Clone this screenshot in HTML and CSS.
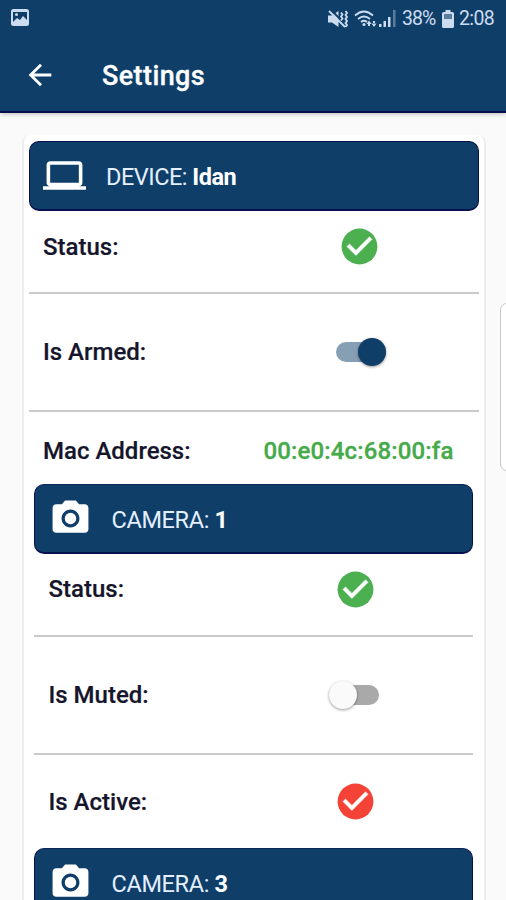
FILE: index.html
```html
<!DOCTYPE html>
<html lang="en">
<head>
<meta charset="utf-8">
<title>Settings</title>
<link rel="stylesheet" href="styles.css">
</head>
<body>
<svg class="defs" aria-hidden="true">
  <symbol id="check" viewBox="0 0 24 24"><circle cx="12" cy="12" r="10" fill="currentColor"/><path fill="#fff" stroke="#fff" stroke-width=".3" d="M10 17l-5-5 1.41-1.41L10 14.17l7.59-7.59L19 8z"/></symbol>
  <symbol id="camera" viewBox="0 0 24 24"><circle cx="12" cy="12" r="3.2"/><path d="M9 2L7.17 4H4c-1.1 0-2 .9-2 2v12c0 1.1.9 2 2 2h16c1.1 0 2-.9 2-2V6c0-1.1-.9-2-2-2h-3.17L15 2H9zm3 15c-2.76 0-5-2.24-5-5s2.24-5 5-5 5 2.24 5 5-2.24 5-5 5z"/></symbol>
</svg>
<div class="screen">
  <header class="top">
    <div class="statusbar">
      <svg class="s-image" viewBox="0 0 18 17"><rect width="18" height="17" rx="2.5"/><path fill="#0f3f69" d="M2 3h14v8l-4-4-3 4-3-2-4 4z"/><circle cx="5.5" cy="5.5" r="1.5"/></svg>
      <div class="indicators">
        <svg class="s-mute" viewBox="0 0 20 18"><path d="M0 5.500h4L10.500 1v16L4 12.500H0z"/><path class="cut" d="M3 0l14 14"/><path class="ink" d="M1 1l16 16M13 2.500l1.500 2-1.500 2 1.500 2-1.500 2M17.500 1l1.500 2-1.500 2 1.500 2-1.500 2 1.500 2-1.500 2 1.500 2-1.500 2"/></svg>
        <svg class="s-wifi" viewBox="0 0 23 18"><path class="ink" d="M1 5.5Q10-2.500 19 5.500M4 9q6-5 12 0M7 12q3-2.500 6 0"/><circle cx="10" cy="14.500" r="1.600"/><path d="M12.500 14l2.500-3.500 2.500 3.500zM17.500 13.500l2.500 3.500 2.500-3.500zM14 13h2v3h-2zM19 11h2v3h-2z"/></svg>
        <svg class="s-signal" viewBox="0 0 17 17"><path d="M0 14h2.500v3H0zM4.500 11H7v6H4.500zM9 7h2.500v10H9z"/><path opacity=".4" d="M14 0h2.500v17H14z"/></svg>
        <span class="percent">38%</span>
        <svg class="s-battery" viewBox="0 0 12 18"><path d="M3.500 0h5v2h2q1.500 0 1.500 1.500v13q0 1.500-1.500 1.500h-9Q0 18 0 16.500v-13Q0 2 1.500 2h2z"/><path fill="#5c7d9c" d="M2 4h8v5H2z"/></svg>
        <span class="clock">2:08</span>
      </div>
    </div>
    <div class="appbar">
      <svg class="back" viewBox="0 0 24 24"><path d="M20 11H7.830l5.590-5.590L12 4l-8 8 8 8 1.410-1.410L7.830 13H20v-2z"/></svg>
      <h1>Settings</h1>
    </div>
  </header>
  <main>
    <section class="card">
      <div class="banner">
        <svg class="icon" viewBox="0 0 24 24"><path d="M20 18c1.100 0 1.990-.9 1.990-2L22 6c0-1.100-.9-2-2-2H4c-1.100 0-2 .9-2 2v10c0 1.100.9 2 2 2H0v2h24v-2h-4zM4 6h16v10H4V6z"/></svg>
        <p>DEVICE: <b>Idan</b></p>
      </div>
      <div class="row status"><span class="label">Status:</span><span class="value"><svg class="check ok"><use href="#check"/></svg></span></div>
      <div class="row toggle"><span class="label">Is Armed:</span><span class="value"><span class="switch on"></span></span></div>
      <div class="row mac"><span class="label">Mac Address:</span><span class="value address">00:e0:4c:68:00:fa</span></div>
      <div class="camera">
        <div class="banner">
          <svg class="icon"><use href="#camera"/></svg>
          <p>CAMERA: <b>1</b></p>
        </div>
        <div class="row status"><span class="label">Status:</span><span class="value"><svg class="check ok"><use href="#check"/></svg></span></div>
        <div class="row toggle"><span class="label">Is Muted:</span><span class="value"><span class="switch off"></span></span></div>
        <div class="row active"><span class="label">Is Active:</span><span class="value"><svg class="check bad"><use href="#check"/></svg></span></div>
      </div>
      <div class="camera">
        <div class="banner">
          <svg class="icon"><use href="#camera"/></svg>
          <p>CAMERA: <b>3</b></p>
        </div>
      </div>
    </section>
  </main>
  <div class="edge-handle"></div>
</div>
</body>
</html>
```

FILE: styles.css
```css
* { box-sizing: border-box; }
body { margin: 0; font-family: Roboto, "Liberation Sans", sans-serif; color: #15152b; background: #fafafa; }
h1, p { margin: 0; }
.defs { position: absolute; width: 0; height: 0; }
.screen { position: relative; width: 506px; height: 900px; overflow: hidden; }

.top { height: 113px; background: #0f3f69; border-bottom: 2px solid #080c50; box-shadow: 0 1px 5px rgba(0, 0, 0, .25); color: #fff; }
.statusbar { display: flex; justify-content: space-between; align-items: center; height: 37px; padding: 0 11px; color: #cbdcf0; fill: #cbdcf0; }
.statusbar svg { display: block; flex: none; }
.s-image { width: 18px; height: 17px; margin-top: -2px; }
.indicators { display: flex; align-items: center; font-size: 19.500px; line-height: 24px; }
.s-mute { width: 20px; height: 18px; margin-right: 6px; }
.s-wifi { width: 23px; height: 18px; margin-right: 2px; }
.s-signal { width: 17px; height: 17px; margin-right: 6px; }
.s-battery { width: 12px; height: 18px; margin: 0 5px 0 6px; }
.ink { fill: none; stroke: #cbdcf0; stroke-width: 1.800; }
.cut { fill: none; stroke: #0f3f69; stroke-width: 2; }
.percent { width: 34px; padding-top: 1px; letter-spacing: -.9px; white-space: nowrap; }
.clock { width: 36px; padding-top: 1px; letter-spacing: -.6px; white-space: nowrap; }
.appbar { display: flex; align-items: center; height: 76px; padding-left: 23px; }
.back { width: 34px; height: 34px; fill: #fff; margin-right: 45px; }
h1 { padding-top: 1px; font-size: 27px; line-height: 32px; font-weight: 500; letter-spacing: .4px; -webkit-text-stroke: .3px; }

main { padding: 22px 20px 0 22px; }
.card { height: 800px; padding: 6px 5px 0 5px; background: #fff; border: solid #ededee; border-width: 0 2px; border-radius: 8px; }
.banner { display: flex; align-items: center; height: 70px; padding-left: 13px; background: #0f3f69; border: 1px solid #07104e; border-width: 1px 1px 2px; border-radius: 10px; color: #fff; }
.icon { width: 43px; height: 43px; fill: #fff; margin-right: 20px; flex: none; }
.banner p { padding-top: 2px; font-size: 23.500px; line-height: 28px; letter-spacing: -.5px; color: #e4efff; }
.banner b { font-weight: 700; color: #fff; }
.row { display: grid; grid-template-columns: 209px 1fr; align-items: center; padding-left: 14px; }
.label { font-size: 24px; line-height: 28px; font-weight: 500; -webkit-text-stroke: .2px; }
.value { display: flex; justify-content: center; align-items: center; padding-right: 13px; }
.status { height: 83px; padding-bottom: 10px; border-bottom: 2px solid #cacacc; }
.toggle { height: 118px; border-bottom: 2px solid #cacacc; }
.mac { height: 72px; padding-top: 6px; }
.address { padding-right: 14px; font-size: 24px; font-weight: 500; letter-spacing: .15px; color: #45aa49; -webkit-text-stroke: .3px; }
.check { display: block; width: 43px; height: 43px; }
.ok { color: #4caf50; }
.bad { color: #f44336; }
.camera { margin: 0 6px 0 5px; }
.camera .banner { padding-left: 13.500px; border-top-color: #0b285b; }
.camera .banner p { letter-spacing: -.35px; }
.camera .status { padding-bottom: 11px; }
.camera .row { grid-template-columns: 203px 1fr; padding-left: 14.500px; }
.active { height: 93px; }
.switch { position: relative; width: 50px; height: 20px; border-radius: 10px; }
.switch::after { content: ""; position: absolute; top: -4px; width: 28px; height: 28px; border-radius: 50%; box-shadow: 0 1px 3px rgba(0, 0, 0, .4); }
.on { background: #879fb5; left: 2px; }
.on::after { right: 0; background: #0f3f69; }
.off { background: #a9a9a9; left: -2px; }
.off::after { left: 0; background: #fafafa; }
.edge-handle { position: absolute; right: -12px; top: 303px; width: 18px; height: 168px; background: #fff; border: 1.500px solid #c8c8c8; border-radius: 7px; }
```
